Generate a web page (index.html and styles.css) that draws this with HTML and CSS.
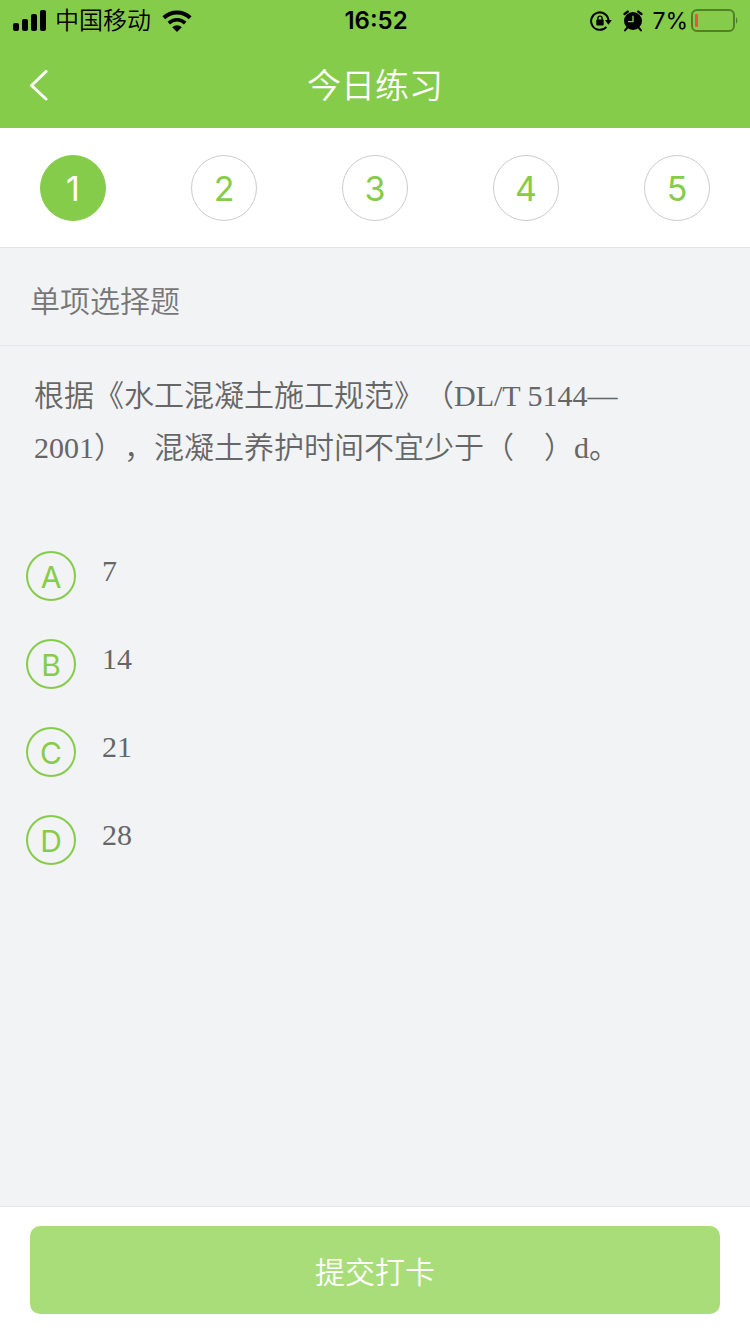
FILE: index.html
```html
<!DOCTYPE html>
<html lang="zh-CN">
<head>
<meta charset="utf-8">
<meta name="viewport" content="width=device-width, initial-scale=1">
<title>今日练习</title>
<link rel="stylesheet" href="styles.css">
</head>
<body>
<div class="app">
  <header class="header">
    <div class="status">
      <div class="status-left">
        <svg class="signal" width="34" height="22" viewBox="0 0 34 22" aria-hidden="true">
          <rect x="0" y="13" width="6" height="8" rx="2"/>
          <rect x="9" y="9" width="6" height="12" rx="2"/>
          <rect x="18" y="4" width="6" height="17" rx="2"/>
          <rect x="27" y="0" width="6" height="21" rx="2"/>
        </svg>
        <span>中国移动</span>
        <svg class="wifi" width="30" height="22" viewBox="0 0 30 22" aria-hidden="true">
          <path d="M1.8 7.8a19 19 0 0 1 26.4 0" fill="none" stroke="#000" stroke-width="4"/>
          <path d="M6.8 13.1a11.8 11.8 0 0 1 16.4 0" fill="none" stroke="#000" stroke-width="3.6"/>
          <path d="M10.2 17.2a7 7 0 0 1 9.6 0L15 22z"/>
        </svg>
      </div>
      <time class="clock">16:52</time>
      <div class="status-right">
        <svg class="lock" width="22" height="20" viewBox="0 0 22 20" aria-hidden="true">
          <path d="M16.400 15.800A8.700 8.700 0 1 1 18.500 9.600" fill="none" stroke="#000" stroke-width="2"/>
          <path d="M15 9h6.800l-3.400 4.800z"/>
          <rect x="6.300" y="8.600" width="7.400" height="6" rx="1"/>
          <path d="M7.900 9V7.200a2.100 2.100 0 0 1 4.200 0V9" fill="none" stroke="#000" stroke-width="1.400"/>
        </svg>
        <svg class="alarm" width="20" height="22" viewBox="0 0 20 22" aria-hidden="true">
          <circle cx="10" cy="11" r="9"/>
          <path d="M1.600 4L4.800 1.600M18.400 4L15.200 1.600" stroke="#000" stroke-width="2.400" stroke-linecap="round"/>
          <path d="M4 18l-2 2.400M16 18l2 2.400" stroke="#000" stroke-width="2" stroke-linecap="round"/>
          <path d="M10 5.800v5.800H5" fill="none" stroke="#86cc4b" stroke-width="1.400"/>
        </svg>
        <span class="percent">7%</span>
        <svg class="battery" width="48" height="24" viewBox="0 0 48 24" aria-hidden="true">
          <rect x="1" y="1" width="42" height="21" rx="5" fill="none" stroke="#518028" stroke-width="2"/>
          <rect x="4" y="5" width="3" height="13" rx="1" fill="#ff4a3c"/>
          <path d="M45 8q3 3.500 0 7z" fill="#518028"/>
        </svg>
      </div>
    </div>
    <div class="nav">
      <button class="back" type="button" aria-label="返回">
        <svg width="20" height="32" viewBox="0 0 20 32" aria-hidden="true"><path d="M17 1.500L2.500 15.500l14.500 13.500" fill="none" stroke="#fff" stroke-width="3" stroke-linecap="round" stroke-linejoin="round"/></svg>
      </button>
      <h1 class="title">今日练习</h1>
    </div>
  </header>

  <nav class="steps" aria-label="题号">
    <button class="step step-active" type="button" aria-current="step">1</button>
    <button class="step" type="button">2</button>
    <button class="step" type="button">3</button>
    <button class="step" type="button">4</button>
    <button class="step" type="button">5</button>
  </nav>

  <h2 class="category">单项选择题</h2>

  <main class="content">
    <p class="question" id="question">根据《水工混凝土施工规范》（DL/T 5144—2001），混凝土养护时间不宜少于（&#x3000;）d。</p>
    <div class="options" role="radiogroup" aria-labelledby="question">
      <label class="option"><input class="option-input" type="radio" name="answer" value="A"><span class="option-mark">A</span><span class="option-text">7</span></label>
      <label class="option"><input class="option-input" type="radio" name="answer" value="B"><span class="option-mark">B</span><span class="option-text">14</span></label>
      <label class="option"><input class="option-input" type="radio" name="answer" value="C"><span class="option-mark">C</span><span class="option-text">21</span></label>
      <label class="option"><input class="option-input" type="radio" name="answer" value="D"><span class="option-mark">D</span><span class="option-text">28</span></label>
    </div>
  </main>

  <footer class="footer">
    <button class="submit" type="button">提交打卡</button>
  </footer>
</div>
</body>
</html>
```
FILE: styles.css
```css
* {
  box-sizing: border-box;
}

body {
  margin: 0;
  font-family: Inter, "Noto Sans CJK SC", sans-serif;
  font-weight: 350;
  color: #666;
  background: #f2f3f5;
}

button {
  padding: 0;
  border: 0;
  font: inherit;
  background: none;
  cursor: pointer;
}

svg {
  display: block;
}

.app {
  display: flex;
  flex-direction: column;
  min-height: 100vh;
}

.header {
  background: #86cc4b;
}

.status {
  display: grid;
  grid-template-columns: 1fr auto 1fr;
  align-items: center;
  height: 40px;
  padding: 0 11px 0 13px;
  color: #000;
  font-size: 24px;
  line-height: 42px;
}

.status-left,
.status-right {
  display: flex;
  align-items: center;
}

.status-left {
  gap: 8px;
}

.wifi {
  margin-left: 3px;
}

.status-right {
  justify-content: flex-end;
}

.clock {
  font-weight: 600;
}

.alarm {
  margin: 0 9px 0 11px;
}

.percent {
  font-size: 23px;
  font-weight: 400;
}

.battery {
  margin-left: 3px;
}

.nav {
  display: grid;
  grid-template-columns: 80px 1fr 80px;
  align-items: center;
  height: 88px;
}

.back {
  display: flex;
  align-items: center;
  height: 88px;
  padding-left: 29px;
}

.title {
  margin: 0;
  color: #fff;
  font-size: 34px;
  font-weight: 350;
  line-height: 92px;
  text-align: center;
}

.steps {
  display: flex;
  justify-content: space-between;
  padding: 27px 40px 26px;
  border-bottom: 1px solid #e2e3e5;
  background: #fff;
}

.step {
  width: 66px;
  height: 66px;
  border: 1px solid #ccc;
  border-radius: 50%;
  color: #86cc4b;
  font-size: 34px;
  font-weight: 400;
  line-height: 66px;
  text-align: center;
}

.step-active {
  border-color: #86cc4b;
  background: #86cc4b;
  color: #fff;
}

.category {
  margin: 0;
  padding: 33px 30px 24px;
  border-bottom: 1px solid #e5e6e9;
  color: #777;
  font-size: 30px;
  font-weight: 350;
  line-height: 40px;
}

.content {
  flex: 1;
  padding: 24px 26px;
  font-family: "Liberation Serif", "Noto Sans CJK SC", serif;
  font-size: 30px;
}

.question {
  margin: 0;
  padding: 0 8px;
  line-height: 52px;
  text-spacing-trim: space-all;
}

.options {
  display: grid;
  gap: 38px;
  margin-top: 77px;
}

.option {
  position: relative;
  display: flex;
  align-items: flex-start;
  gap: 26px;
  cursor: pointer;
}

.option-input {
  position: absolute;
  width: 50px;
  height: 50px;
  margin: 0;
  opacity: 0;
}

.option-mark {
  width: 50px;
  height: 50px;
  border: 2px solid #86cc4b;
  border-radius: 50%;
  color: #86cc4b;
  font-family: Inter, sans-serif;
  font-size: 30px;
  font-weight: 400;
  line-height: 48px;
  text-align: center;
}

.option-input:checked + .option-mark {
  background: #86cc4b;
  color: #fff;
}

.option-text {
  line-height: 40px;
}

.footer {
  padding: 19px 30px 20px;
  border-top: 1px solid #e5e6e9;
  background: #fff;
}

.submit {
  display: block;
  width: 100%;
  height: 88px;
  border-radius: 10px;
  background: #a9dd7a;
  color: #fff;
  font-size: 30px;
}
```
